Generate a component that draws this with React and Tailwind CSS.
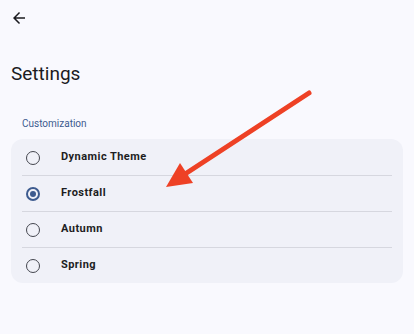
const themes = [
  { name: 'Dynamic Theme', selected: false },
  { name: 'Frostfall', selected: true },
  { name: 'Autumn', selected: false },
  { name: 'Spring', selected: false },
];

function Radio({ checked }) {
  if (checked) {
    return (
      <span className="w-[14px] h-[14px] rounded-full border-2 border-[#3d5b8f] flex items-center justify-center">
        <span className="w-[6px] h-[6px] rounded-full bg-[#3d5b8f]" />
      </span>
    );
  }
  return <span className="w-[14px] h-[14px] rounded-full border-[1.75px] border-[#44464f]" />;
}

export default function App() {
  return (
    <div className="relative w-[414px] h-[334px] overflow-hidden bg-[#f9f9fe] font-['Roboto',sans-serif]">
      {/* top bar */}
      <div className="h-[35px] flex items-center pl-[10px]">
        <svg width="18" height="18" viewBox="0 0 24 24" fill="#1b1b1f">
          <path d="M20 11H7.83l5.59-5.59L12 4l-8 8 8 8 1.41-1.41L7.83 13H20v-2z" />
        </svg>
      </div>

      <h1 className="mt-[28px] ml-[11px] text-[19px] leading-[22px] text-[#1b1b1f]">Settings</h1>

      <p className="mt-[33px] ml-[22px] text-[10px] leading-[12px] text-[#3d5b8f]">Customization</p>

      <div className="mt-[9px] mx-[11px] rounded-[12px] bg-[#f0f1f8] pt-px">
        {themes.map((t, i) => (
          <div key={t.name}>
            {i > 0 && <div className="mx-[11px] h-px bg-[#d6d7df]" />}
            <div className="h-[35px] flex items-center pl-[15px]">
              <Radio checked={t.selected} />
              <span className="ml-[21px] text-[11px] font-bold tracking-[0.45px] text-[#1d1d22]">{t.name}</span>
            </div>
          </div>
        ))}
      </div>

      {/* annotation arrow */}
      <svg className="absolute left-0 top-0 pointer-events-none" width="414" height="334">
        <line x1="309" y1="93" x2="182" y2="176" stroke="#ee4125" strokeWidth="5" strokeLinecap="round" />
        <polygon points="166,187 180,163 193,183" fill="#ee4125" />
      </svg>
    </div>
  );
}
